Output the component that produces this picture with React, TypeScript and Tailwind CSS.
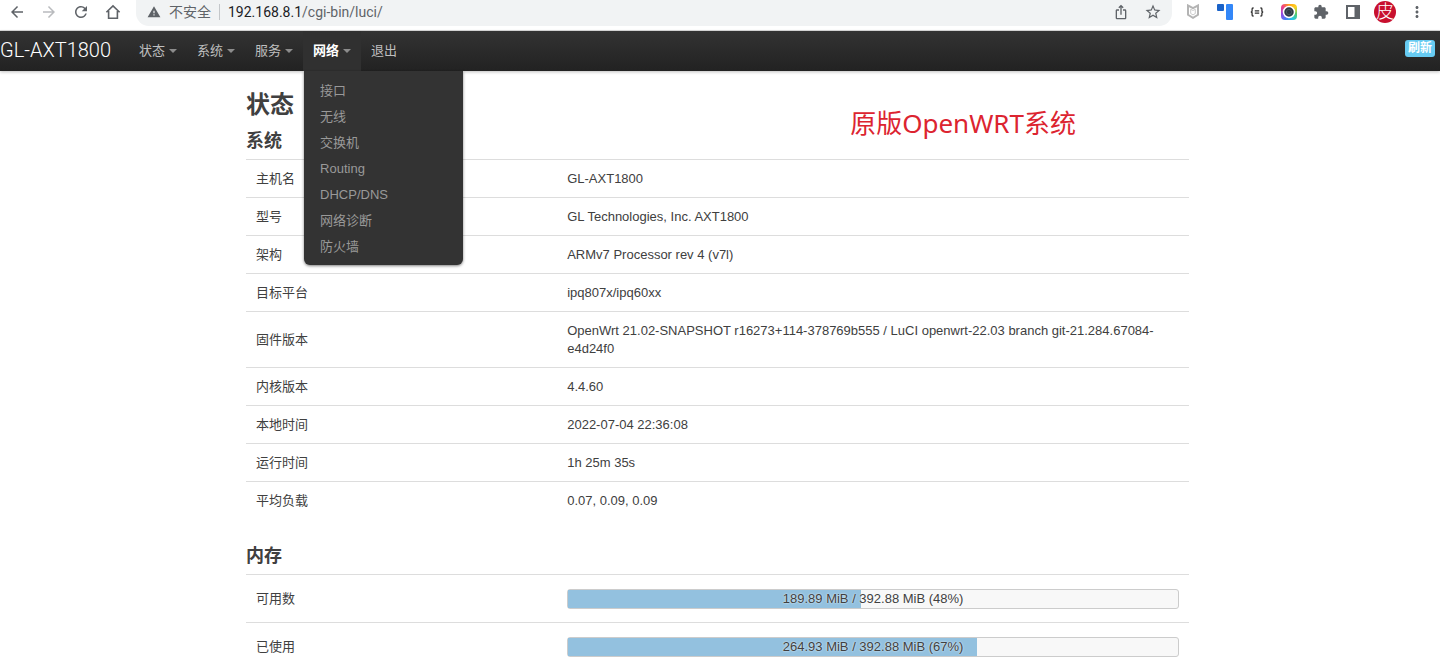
import { MdArrowBack, MdArrowForward, MdExtension, MdMoreVert, MdOutlineIosShare, MdRefresh, MdStarBorder, MdWarning } from 'react-icons/md';

const navItems = [
  { label: '状态', menu: true },
  { label: '系统', menu: true },
  { label: '服务', menu: true },
  { label: '网络', menu: true, open: true },
  { label: '退出' },
];

const networkMenu = ['接口', '无线', '交换机', 'Routing', 'DHCP/DNS', '网络诊断', '防火墙'];

const systemRows = [
  ['主机名', 'GL-AXT1800'],
  ['型号', 'GL Technologies, Inc. AXT1800'],
  ['架构', 'ARMv7 Processor rev 4 (v7l)'],
  ['目标平台', 'ipq807x/ipq60xx'],
  ['固件版本', 'OpenWrt 21.02-SNAPSHOT r16273+114-378769b555 / LuCI openwrt-22.03 branch git-21.284.67084-e4d24f0'],
  ['内核版本', '4.4.60'],
  ['本地时间', '2022-07-04 22:36:08'],
  ['运行时间', '1h 25m 35s'],
  ['平均负载', '0.07, 0.09, 0.09'],
];

const memoryRows = [
  { label: '可用数', text: '189.89 MiB / 392.88 MiB (48%)', percent: 48 },
  { label: '已使用', text: '264.93 MiB / 392.88 MiB (67%)', percent: 67 },
];

function HomeIcon() {
  return (
    <svg viewBox="0 0 18 18" className="size-[18px]" fill="none" stroke="currentColor" strokeWidth="1.600">
      <path d="M2.400 9.300 9 2.900l6.600 6.400M4.600 8v7.200h8.800V8" />
    </svg>
  );
}

function ShieldIcon() {
  return (
    <svg viewBox="0 0 14 16" className="h-4 w-3.5" fill="none" stroke="#b4b4b4">
      <path d="M2 1.500v9.300l5 3 5-3V1.500L7 4.200z" strokeWidth="2" />
      <path d="M4.700 5.300v4.200L7 10.900l2.300-1.400V5.300L7 6.500z" strokeWidth=".7" />
    </svg>
  );
}

function BlocksIcon() {
  return (
    <svg viewBox="0 0 16 16" className="size-4">
      <rect width="7" height="7" rx="1" fill="#1a62c8" />
      <rect x="9" width="7" height="16" rx="1" fill="#3387f8" />
    </svg>
  );
}

function BracesIcon() {
  return (
    <svg viewBox="0 0 14 10" className="h-2.5 w-3.5" fill="none" stroke="#333" strokeWidth="1.300">
      <path d="M3.600 1H3Q2.100 1 2.100 2v1.800Q2.100 5 .8 5q1.300 0 1.300 1.200V8q0 1 .9 1h.6M10.400 1h.6q.9 0 .9 1v1.800q0 1.200 1.300 1.200-1.300 0-1.300 1.200V8q0 1-.9 1h-.6" />
      <path d="M4.800 3.800h4.400M4.800 6.200h4.400" />
    </svg>
  );
}

function CameraIcon() {
  return (
    <span className="flex size-4 items-center justify-center rounded-sm bg-[conic-gradient(#ff9f1a,#ffd21f,#58c96a,#22c7e8,#4b7bf5,#9a48e0,#ef3f86,#ff9f1a)]">
      <svg viewBox="0 0 16 16" className="size-4">
        <circle cx="8" cy="8" r="5.500" fill="#2f3a44" stroke="#fff" strokeWidth="1.500" />
        <circle cx="8" cy="8" r="2.600" fill="none" stroke="#4b5965" />
      </svg>
    </span>
  );
}

function SidePanelIcon() {
  return (
    <svg viewBox="0 0 14 14" className="size-3.5">
      <path d="M1 1h12v12H1z" fill="none" stroke="#5f6368" strokeWidth="2" />
      <path d="M8.500 1H13v12H8.500z" fill="#5f6368" />
    </svg>
  );
}

function Caret() {
  return <span className="ml-1 border-x-4 border-t-4 border-x-transparent border-t-[#8c8c8c]" />;
}

function BrowserBar() {
  return (
    <div className="flex h-[31px] items-start border-b border-[#dcdcdc] bg-white font-[Roboto,'Noto_Sans_CJK_SC',sans-serif] text-[#5f6368]">
      <div className="flex h-6 items-center gap-3.5 pr-3.5 pl-2">
        <button aria-label="后退"><MdArrowBack className="size-[18px]" /></button>
        <button aria-label="前进" className="text-[#b9bbbe]"><MdArrowForward className="size-[18px]" /></button>
        <button aria-label="重新加载"><MdRefresh className="size-[18px]" /></button>
        <button aria-label="主页"><HomeIcon /></button>
      </div>
      <div className="flex h-[26px] flex-1 items-center rounded-b-[13px] bg-[#f1f3f4] pr-2.5 pb-0.5 pl-[11px]">
        <MdWarning className="size-3.5" />
        <span className="ml-2 border-r border-[#c4c7ca] pr-2 text-sm leading-4">不安全</span>
        <span className="ml-2 flex-1 text-sm leading-6"><span className="text-[#202124]">192.168.8.1</span>/cgi-bin/luci/</span>
        <div className="flex items-center gap-[15px]">
          <button aria-label="分享"><MdOutlineIosShare className="size-4" /></button>
          <button aria-label="收藏"><MdStarBorder className="size-[18px]" /></button>
        </div>
      </div>
      <div className="flex h-6 items-center pr-[7px] pl-[5px]">
        <button aria-label="安全防护" className="flex w-8 justify-center"><ShieldIcon /></button>
        <button aria-label="翻译" className="flex w-8 justify-center"><BlocksIcon /></button>
        <button aria-label="JSON" className="flex w-8 justify-center"><BracesIcon /></button>
        <button aria-label="截图" className="flex w-8 justify-center"><CameraIcon /></button>
        <button aria-label="扩展程序" className="flex w-8 justify-center"><MdExtension className="size-4" /></button>
        <button aria-label="侧边栏" className="flex w-8 justify-center"><SidePanelIcon /></button>
        <button aria-label="个人资料" className="flex w-8 justify-center">
          <span className="flex size-[22px] items-center justify-center rounded-full bg-[#c8102e] text-lg leading-none font-light text-white">皮</span>
        </button>
        <button aria-label="更多" className="flex w-8 justify-center"><MdMoreVert className="size-[18px]" /></button>
      </div>
    </div>
  );
}

function NavBar() {
  return (
    <header className="relative z-10 flex h-10 items-center bg-linear-to-b from-[#333] to-[#222] pr-[5px] shadow-[0_1px_3px_rgba(0,0,0,0.25)]">
      <a href="#" className="w-[129px] pb-0.5 font-[Roboto,sans-serif] text-xl font-light text-white">GL-AXT1800</a>
      <ul className="flex flex-1">
        {navItems.map((item) => (
          <li key={item.label} className="relative">
            <a
              href="#"
              className={
                item.open
                  ? 'flex h-10 items-center bg-[#303030] px-2.5 font-bold text-white'
                  : 'flex h-10 items-center px-2.5 text-[#bfbfbf]'
              }
            >
              {item.label}
              {item.menu && <Caret />}
            </a>
            {item.open && (
              <ul className="absolute top-full left-px w-[159px] rounded-b-md bg-[#333] pt-[7px] pb-[5px] shadow-[0_1px_3px_rgba(0,0,0,0.5)]">
                {networkMenu.map((entry) => (
                  <li key={entry}>
                    <a href="#" className="block px-4 py-1 text-[#999]">{entry}</a>
                  </li>
                ))}
              </ul>
            )}
          </li>
        ))}
      </ul>
      <button className="mb-1.5 rounded-[3px] bg-[#67cbf2] px-[3px] text-xs leading-[17px] font-bold text-white">刷新</button>
    </header>
  );
}

export default function App() {
  return (
    <div className="min-h-screen bg-white font-['Liberation_Sans','Noto_Sans_CJK_SC',sans-serif] text-[13px] leading-[18px] text-[#404040]">
      <BrowserBar />
      <NavBar />
      <main className="pt-4 pr-[5px]">
        <div className="relative mx-auto max-w-[943px]">
          <h1 className="text-2xl leading-9 font-bold">状态</h1>
          <p className="absolute top-4 right-[113px] font-['Noto_Sans','Noto_Sans_CJK_SC',sans-serif] text-[26px] leading-10 text-[#dc2430]">原版OpenWRT系统</p>

          <h2 className="text-lg leading-9 font-bold">系统</h2>
          <table className="mb-[19px] w-full table-fixed border-separate border-spacing-0">
            <tbody>
              {systemRows.map(([label, value]) => (
                <tr key={label}>
                  <th scope="row" className="w-[33%] border-t border-[#ddd] px-2.5 pt-2.5 pb-[9px] text-left font-normal">{label}</th>
                  <td className="border-t border-[#ddd] px-2.5 pt-2.5 pb-[9px]">{value}</td>
                </tr>
              ))}
            </tbody>
          </table>

          <h2 className="text-lg leading-9 font-bold">内存</h2>
          <table className="w-full table-fixed border-separate border-spacing-0">
            <tbody>
              {memoryRows.map((row) => (
                <tr key={row.label}>
                  <th scope="row" className="w-[33%] border-t border-[#ddd] px-2.5 text-left font-normal">{row.label}</th>
                  <td className="border-t border-[#ddd] px-2.5 pt-3.5 pb-[13px]">
                    <div
                      role="progressbar"
                      aria-label={row.label}
                      aria-valuenow={row.percent}
                      className="relative h-5 rounded-[3px] border border-[#ccc] bg-[#f8f8f8]"
                    >
                      <div className="h-full bg-[#93c1df]" style={{ width: `${row.percent}%` }} />
                      <span className="absolute inset-0 text-center [text-shadow:0_0_2px_#fff]">{row.text}</span>
                    </div>
                  </td>
                </tr>
              ))}
            </tbody>
          </table>
        </div>
      </main>
    </div>
  );
}
